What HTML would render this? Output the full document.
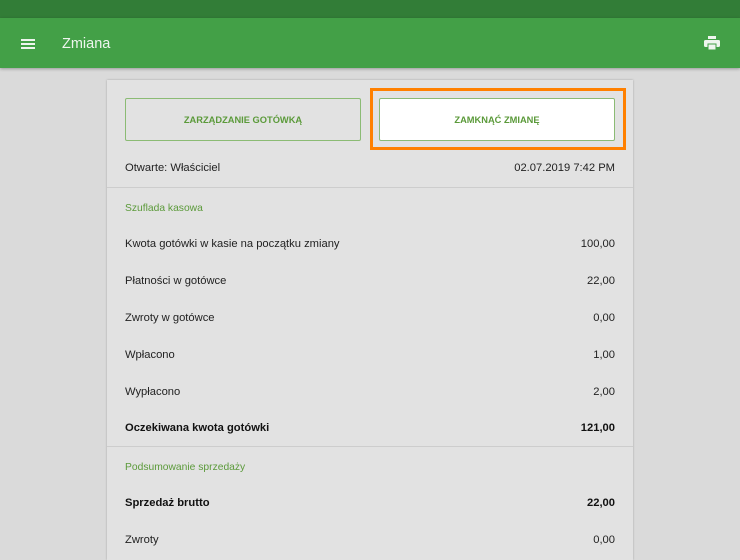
<!DOCTYPE html>
<html><head><meta charset="utf-8"><style>
*{margin:0;padding:0;box-sizing:border-box}
body{width:740px;height:555px;overflow:hidden;background:#dadada;font-family:"Liberation Sans",sans-serif;position:relative}
.sb{position:absolute;left:0;top:0;width:740px;height:18px;background:#327d37}
.tb{position:absolute;left:0;top:18px;width:740px;height:50px;background:#43a047;box-shadow:0 1px 3px rgba(0,0,0,.3)}
.tb .t{position:absolute;left:62px;top:18px;color:#eef5ee;font-size:14.5px}
.card{position:absolute;left:107px;top:80px;width:526px;height:480px;background:#e2e2e2;box-shadow:0 0 2px rgba(0,0,0,.25)}
.btn{position:absolute;top:18px;height:43px;border:1px solid #8bbb74;border-radius:2px;color:#5b9a3a;font-size:9.3px;font-weight:bold;display:flex;align-items:center;justify-content:center}
.hl{position:absolute;left:263px;top:8px;width:256px;height:62px;border:3px solid #ff8000}
.r{position:absolute;left:18px;right:18px;font-size:11.2px;color:#222;display:flex;justify-content:space-between}
.b{font-weight:bold;color:#111}
.g{color:#5b9a3a;font-size:10.3px}
.d{position:absolute;left:0;right:0;height:1px;background:#cdcdcd}
</style></head><body>
<div class="sb"></div>
<div class="tb">
<svg style="position:absolute;left:21px;top:21px" width="14" height="10"><rect y="0" width="14" height="2" fill="#eef5ee"/><rect y="4" width="14" height="2" fill="#eef5ee"/><rect y="8" width="14" height="2" fill="#eef5ee"/></svg>
<div class="t">Zmiana</div>
<svg style="position:absolute;left:704px;top:18px" width="16" height="14" viewBox="0 0 16 14"><rect x="4" y="0" width="8" height="3" fill="#eef5ee"/><rect x="0" y="4" width="16" height="7" rx="1.5" fill="#eef5ee"/><rect x="4" y="8" width="8" height="6" fill="#eef5ee" stroke="#43a047" stroke-width="1"/></svg>
</div>
<div class="card">
<div class="btn" style="left:18px;width:236px">ZARZĄDZANIE GOTÓWKĄ</div>
<div class="hl"></div>
<div class="btn" style="left:272px;width:236px;background:#fff">ZAMKNĄĆ ZMIANĘ</div>
<div class="r" style="top:82px"><span>Otwarte: Właściciel</span><span>02.07.2019 7:42 PM</span></div>
<div class="d" style="top:107px"></div>
<div class="r g" style="top:123px"><span>Szuflada kasowa</span></div>
<div class="r" style="top:158px"><span>Kwota gotówki w kasie na początku zmiany</span><span>100,00</span></div>
<div class="r" style="top:195px"><span>Płatności w gotówce</span><span>22,00</span></div>
<div class="r" style="top:232px"><span>Zwroty w gotówce</span><span>0,00</span></div>
<div class="r" style="top:269px"><span>Wpłacono</span><span>1,00</span></div>
<div class="r" style="top:306px"><span>Wypłacono</span><span>2,00</span></div>
<div class="r b" style="top:342px"><span>Oczekiwana kwota gotówki</span><span>121,00</span></div>
<div class="d" style="top:366px"></div>
<div class="r g" style="top:382px"><span>Podsumowanie sprzedaży</span></div>
<div class="r b" style="top:417px"><span>Sprzedaż brutto</span><span>22,00</span></div>
<div class="r" style="top:454px"><span>Zwroty</span><span>0,00</span></div>
</div>
</body></html>
